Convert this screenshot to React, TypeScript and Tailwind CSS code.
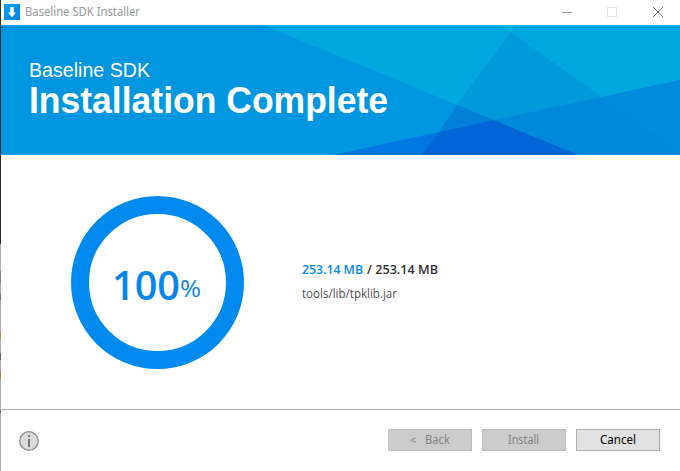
import React from "react";

function Banner() {
  return (
    <svg className="absolute inset-0" width="679" height="130" viewBox="1 25 679 130">
      <rect x="1" y="25" width="679" height="130" fill="#0096e0" />
      <polygon points="263,25 680,25 680,80 494,120" fill="#00a8df" />
      <polygon points="510.5,32 602,97 494,120 457,105" fill="#009adb" />
      <polygon points="501,25 515,25 510.5,32" fill="#00b4e0" />
      <polygon points="457,105 494,120 439,132" fill="#0080d8" />
      <polygon points="333,155 439,132 421,155" fill="#0078e1" />
      <polygon points="439,132 494,120 579,155 421,155" fill="#0066d8" />
      <polygon points="494,120 602,97 680,153 680,155 579,155" fill="#0088db" />
      <polygon points="602,97 680,80 680,153" fill="#008cdc" />
    </svg>
  );
}

function FitText({ text, width, size, color, weight = 400, family = "Noto Sans", height = 20, base = 15 }: {
  text: string; width: number; size: number; color: string; weight?: number; family?: string; height?: number; base?: number;
}) {
  return (
    <svg className="block shrink-0 overflow-visible" width={width} height={height}>
      <text x="0" y={base} textLength={width} lengthAdjust="spacingAndGlyphs" fontSize={size} fill={color} fontWeight={weight} fontFamily={`"${family}", sans-serif`}>{text}</text>
    </svg>
  );
}

export default function App() {
  return (
    <div className="flex h-[471px] w-[680px] overflow-hidden bg-white font-['Noto_Sans',sans-serif]">
      <div className="flex w-px shrink-0 flex-col bg-[#aaaaaa]">
        <div className="h-[244px] bg-[#2c2c2c]" />
        <div className="mt-[27px] h-3 bg-[#8b8178]" />
        <div className="mt-[10px] h-[7px] bg-[#79719c]" />
        <div className="mt-[31px] h-2 bg-[#b78d4c]" />
        <div className="mt-[14px] h-[7px] bg-[#596477]" />
        <div className="mt-[11px] h-2 bg-[#b5813f]" />
        <div className="mt-[31px] h-[3px] bg-[#6c6650]" />
      </div>
      <div className="flex w-[679px] flex-col">
        <header className="flex h-[25px] shrink-0 items-start">
          <svg className="ml-[3px] mt-1 shrink-0" width="16" height="16" viewBox="0 0 16 16">
            <rect width="16" height="16" fill="#0098f0" />
            <path d="M16 0V16H0Z" fill="#0088f0" />
            <path d="M6.2 3h3.600v5.500H12l-4 5-4-5h2.200z" fill="#fff" />
          </svg>
          <div className="ml-[5px]">
            <FitText text="Baseline SDK Installer" width={115} size={12.5} color="#999999" height={25} base={16} />
          </div>
          <svg className="ml-auto shrink-0" width="130" height="25" viewBox="550 0 130 25" fill="none" shapeRendering="crispEdges">
            <path d="M562 12.5h10" stroke="#999" />
            <rect x="607.5" y="7.5" width="9" height="9" stroke="#e5e5e5" />
            <path d="M653 7l10 10M663 7l-10 10" stroke="#808080" shapeRendering="auto" />
          </svg>
        </header>
        <section className="relative h-[130px] shrink-0">
          <Banner />
          <div className="relative pl-7 pt-[34px]">
            <FitText text="Baseline SDK" width={121} size={21} color="#fff" family="Liberation Sans" height={22} base={18} />
            <FitText text="Installation Complete" width={359} size={37} color="#fff" weight={700} family="Liberation Sans" height={44} base={32} />
          </div>
        </section>
        <main className="flex h-[254px] shrink-0">
          <div className="ml-[70px] mt-[41px] flex h-[173px] w-[173px] shrink-0 items-start rounded-full border-[18px] border-[#008aef] pl-[23px] pt-[50px]">
            <FitText text="100" width={68} size={40} color="#0886ea" weight={640} family="Open Sans" height={50} base={36} />
            <FitText text="%" width={21} size={23} color="#0886ea" weight={500} family="Open Sans" height={50} base={33} />
          </div>
          <div className="ml-[58px] mt-[104px] flex flex-col gap-1">
            <div className="flex gap-[4px]">
              <FitText text="253.14 MB" width={61} size={12} color="#0886ea" weight={600} family="Open Sans" base={15} />
              <FitText text="/ 253.14 MB" width={71} size={12} color="#303030" weight={600} family="Open Sans" base={15} />
            </div>
            <FitText text="tools/lib/tpklib.jar" width={95} size={12.5} color="#505050" family="Open Sans" base={15} />
          </div>
        </main>
        <footer className="flex h-[62px] shrink-0 items-start border-t border-[#adadad] pr-5">
          <svg className="ml-[18px] mt-[21px] shrink-0" width="20" height="20" viewBox="0 0 20 20">
            <circle cx="10" cy="10" r="9.3" fill="#dadada" stroke="#8c8c8c" strokeWidth="1.3" />
            <path d="M9 4h2v2H9zM9 8h2v8H9z" fill="#777" />
          </svg>
          <div className="ml-auto mt-[19px] flex gap-[10px]">
            <button className="flex h-[22px] w-[84px] items-start gap-[9px] border border-[#bfbfbf] bg-[#cccccc] pl-[21px]">
              <FitText text="<" width={6} size={11} color="#838383" base={14} />
              <FitText text="Back" width={25} size={12.5} color="#838383" base={14} />
            </button>
            <button className="flex h-[22px] w-[84px] items-start border border-[#bfbfbf] bg-[#cccccc] pl-[25px]">
              <FitText text="Install" width={31} size={12.5} color="#838383" base={14} />
            </button>
            <button className="flex h-[22px] w-[84px] items-start border border-[#adadad] bg-[#e1e1e1] pl-[23px]">
              <FitText text="Cancel" width={36} size={12.5} color="#000000" base={14} />
            </button>
          </div>
        </footer>
      </div>
    </div>
  );
}
